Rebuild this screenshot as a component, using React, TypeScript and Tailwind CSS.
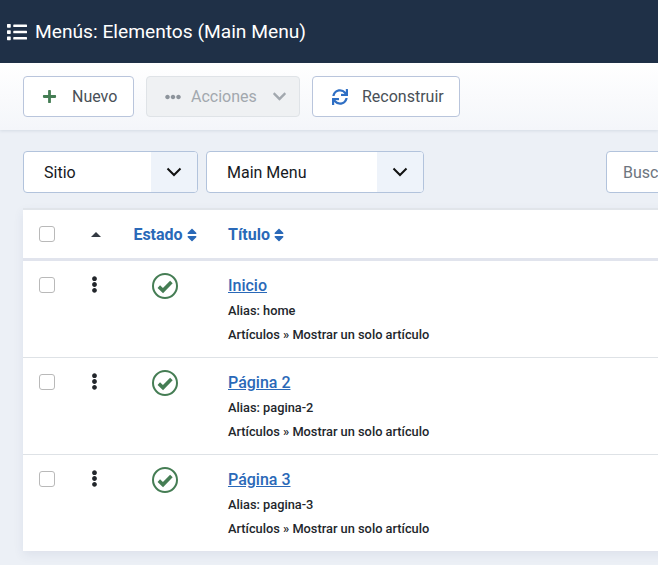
import { FaChevronDown, FaEllipsisH, FaEllipsisV, FaList, FaPlus, FaSort, FaSync } from "react-icons/fa";

const rows = [
  { title: "Inicio", alias: "home" },
  { title: "Página 2", alias: "pagina-2" },
  { title: "Página 3", alias: "pagina-3" },
];

function Checkbox() {
  return <span className="block h-4 w-4 rounded-[3px] border border-[#b9b9b9] bg-white" />;
}

function Chevron() {
  return (
    <svg width="16" height="10" viewBox="0 0 16 10" fill="none" stroke="#111" strokeWidth="2">
      <path d="M1.5 1.5 8 8l6.5-6.5" />
    </svg>
  );
}

function StatusIcon() {
  return (
    <svg width="26" height="26" viewBox="0 0 26 26" fill="none">
      <circle cx="13" cy="13" r="12" stroke="#457d54" strokeWidth="2" />
      <path d="M6.8 13.6 11 17.6 19.4 9" stroke="#457d54" strokeWidth="3.6" />
    </svg>
  );
}

function Select({ label, width }: { label: string; width: string }) {
  return (
    <div className={`flex h-[42px] ${width} shrink-0 items-center overflow-hidden rounded border border-[#b2c3dc] bg-white`}>
      <span className="flex-1 pl-5 pt-px text-base text-[#16191d]">{label}</span>
      <span className="flex h-full w-[46px] items-center justify-center bg-[#eef3fa]">
        <Chevron />
      </span>
    </div>
  );
}

export default function App() {
  return (
    <div className="h-[565px] w-[658px] overflow-hidden bg-[#ecf0f6] font-['Roboto',sans-serif]">
      <header className="flex h-[63px] items-center bg-[#1f3047] pl-[7px] text-white">
        <FaList className="mr-[8px] h-[20px] w-[20px]" />
        <h1 className="text-[19.2px] leading-none">Menús: Elementos (Main Menu)</h1>
      </header>

      <div className="flex h-[67px] items-start gap-3 bg-gradient-to-b from-white to-[#f4f6fa] pl-[23px] pt-[13px] shadow-[0_1px_3px_rgba(50,70,110,0.12)]">
        <button className="flex h-[41px] w-[111px] items-center rounded border border-[#b9c5dc] bg-white pl-[18px] text-base text-[#495057]">
          <FaPlus className="mr-[15px] h-[15px] w-[15px] text-[#457d54]" />
          Nuevo
        </button>
        <button className="flex h-[41px] w-[154px] items-center rounded border border-[#dfe3e7] bg-[#eff1f3] pl-[18px] text-base text-[#a2a8ae]">
          <FaEllipsisH className="mr-[10px] h-[16px] w-[16px] text-[#8d949b]" />
          Acciones
          <FaChevronDown className="ml-[15px] h-[15px] w-[15px] text-[#a2a8ae]" />
        </button>
        <button className="flex h-[41px] w-[148px] items-center rounded border border-[#b9c5dc] bg-white pl-[19px] text-base text-[#495057]">
          <FaSync className="mr-[14px] h-[16px] w-[16px] text-[#2f6fc4]" />
          Reconstruir
        </button>
      </div>

      <div className="flex h-[78px] items-start gap-2 pl-[23px] pt-[21px]">
        <Select label="Sitio" width="w-[175px]" />
        <Select label="Main Menu" width="w-[218px]" />
        <div className="ml-[174px] flex h-[42px] w-[200px] shrink-0 items-center rounded border border-[#b2c3dc] bg-white pl-[16px] pt-px text-base text-[#6d757e]">
          Buscar
        </div>
      </div>

      <div className="ml-[23px] w-[700px] bg-white shadow-[0_4px_10px_rgba(50,70,110,0.08)]">
        <div className="flex h-[53px] items-center border-t-2 border-b-[3px] border-t-[#e1e5ea] border-b-[#e1e4ed] text-base font-bold text-[#2a69b8]">
          <span className="flex w-[48px] justify-center"><Checkbox /></span>
          <span className="flex w-[50px] justify-center">
            <svg width="10" height="5" viewBox="0 0 10 5" fill="#333a42"><path d="M5 0 10 5H0z" /></svg>
          </span>
          <span className="flex w-[107px] items-center justify-center pr-[19px] pt-px">
            Estado<FaSort className="ml-[4px] h-[16px] w-[10px]" />
          </span>
          <span className="flex items-center pt-px">
            Título<FaSort className="ml-[4px] h-[16px] w-[10px]" />
          </span>
        </div>
        {rows.map((row, i) => (
          <div key={row.alias} className={i < 2 ? "flex h-[97px] items-start border-b border-[#dee2e6]" : "flex h-[96px] items-start"}>
            <span className="flex w-[48px] justify-center pt-[16px]"><Checkbox /></span>
            <span className="flex w-[50px] justify-center pr-[4px] pt-[15px]"><FaEllipsisV className="h-[17px] w-[17px] text-[#22262b]" /></span>
            <span className="flex w-[107px] justify-center pr-[19px] pt-[12px]"><StatusIcon /></span>
            <div className="pt-[14px]">
              <a href="#" className="block text-base font-medium leading-[22px] text-[#2a69b8] underline">{row.title}</a>
              <div className="mt-[2px] text-[12.8px] font-medium leading-[24px] text-[#22262b]">Alias: {row.alias}</div>
              <div className="text-[12.8px] font-medium leading-[24px] text-[#22262b]">Artículos » Mostrar un solo artículo</div>
            </div>
          </div>
        ))}
      </div>
    </div>
  );
}
